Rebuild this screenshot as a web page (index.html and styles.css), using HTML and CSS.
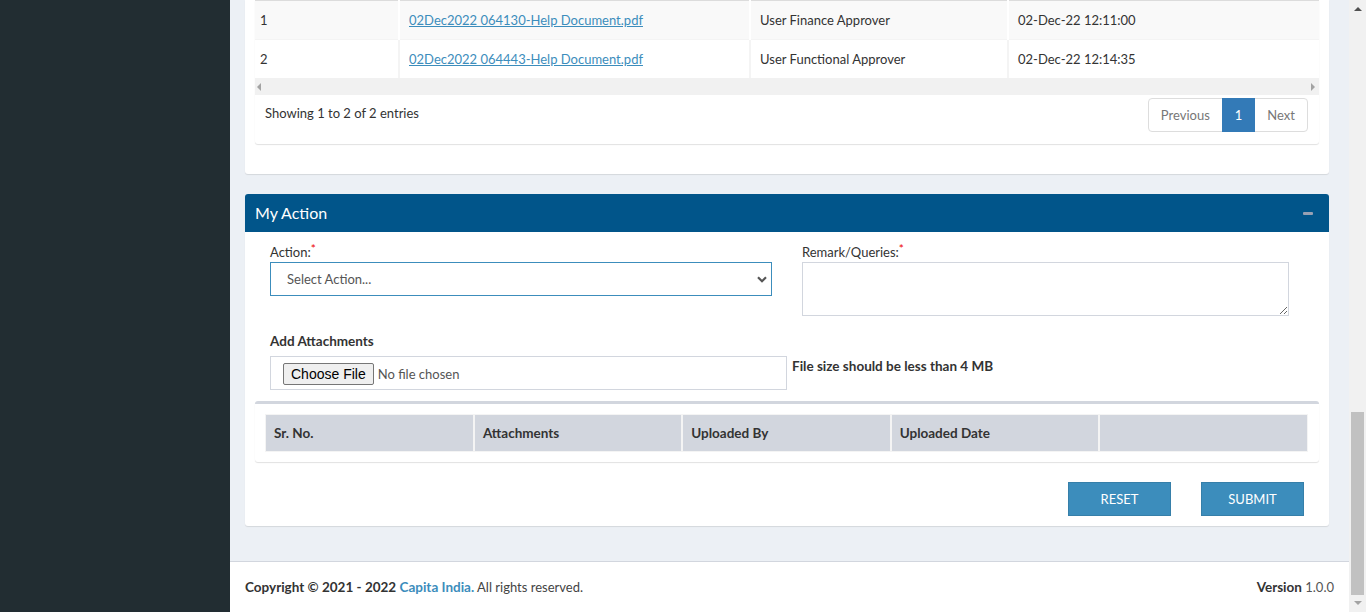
FILE: index.html
```html
<!DOCTYPE html>
<html lang="en">
<head>
<meta charset="utf-8">
<title>My Action</title>
<link rel="stylesheet" href="styles.css">
</head>
<body>
<div class="layout">
  <aside class="sidebar"></aside>
  <div class="main">
    <div class="content">
      <section class="card card-top">
        <div class="box list-box">
          <div class="table-scroll">
            <table class="grid">
              <tbody>
                <tr class="odd">
                  <td class="c1">1</td>
                  <td class="c2"><a href="#">02Dec2022 064130-Help Document.pdf</a></td>
                  <td class="c3">User Finance Approver</td>
                  <td class="c4">02-Dec-22 12:11:00</td>
                </tr>
                <tr class="even">
                  <td class="c1">2</td>
                  <td class="c2"><a href="#">02Dec2022 064443-Help Document.pdf</a></td>
                  <td class="c3">User Functional Approver</td>
                  <td class="c4">02-Dec-22 12:14:35</td>
                </tr>
              </tbody>
            </table>
          </div>
          <div class="hscroll"><span class="tri tri-left"></span><span class="tri tri-right"></span></div>
          <div class="dt-footer">
            <div class="dt-info">Showing 1 to 2 of 2 entries</div>
            <ul class="pagination">
              <li class="disabled"><a href="#">Previous</a></li>
              <li class="active"><a href="#">1</a></li>
              <li class="disabled"><a href="#">Next</a></li>
            </ul>
          </div>
        </div>
      </section>

      <section class="card action-card">
        <div class="card-header">
          <h3 class="card-title">My Action</h3>
          <button class="tool-btn" type="button" aria-label="Collapse"><span class="minus"></span></button>
        </div>
        <div class="card-body">
          <div class="form-row">
            <div class="field">
              <label class="lbl" for="action">Action:<span class="req">*</span></label>
              <div class="select-wrap">
                <select id="action" class="control select">
                  <option>Select Action...</option>
                </select>
                <svg class="chev" width="10" height="7" viewBox="0 0 10 7"><path d="M1 1.2 L5 5.2 L9 1.2" fill="none" stroke="#555" stroke-width="2.2"/></svg>
              </div>
            </div>
            <div class="field">
              <label class="lbl" for="remark">Remark/Queries:<span class="req">*</span></label>
              <textarea id="remark" class="control textarea"></textarea>
            </div>
          </div>

          <div class="attach">
            <div class="lbl-bold">Add Attachments</div>
            <div class="file-row">
              <div class="file-box"><input type="file" class="file-input"></div>
              <span class="hint">File size should be less than 4 MB</span>
            </div>
          </div>

          <div class="box attach-box">
            <table class="att-table">
              <thead>
                <tr>
                  <th>Sr. No.</th>
                  <th>Attachments</th>
                  <th>Uploaded By</th>
                  <th>Uploaded Date</th>
                  <th></th>
                </tr>
              </thead>
            </table>
          </div>

          <div class="actions">
            <button class="btn" type="button">RESET</button>
            <button class="btn" type="button">SUBMIT</button>
          </div>
        </div>
      </section>
    </div>

    <footer class="footer">
      <div><strong>Copyright © 2021 - 2022 <a href="#">Capita India.</a></strong> All rights reserved.</div>
      <div><strong>Version</strong> <span class="ver">1.0.0</span></div>
    </footer>
  </div>
  <div class="vscroll">
    <span class="vtri vtri-up"></span>
    <span class="thumb"></span>
    <span class="vtri vtri-down"></span>
  </div>
</div>
</body>
</html>
```

FILE: styles.css
```css
* { box-sizing: border-box; }

html, body {
  margin: 0;
  height: 612px;
  overflow: hidden;
}

body {
  font-family: "Lato", "Liberation Sans", sans-serif;
  font-size: 13px;
  line-height: 20px;
  color: #333;
  background: #ecf0f5;
}

strong, b { font-size: 13.5px; }

a { color: #3c8dbc; }

.layout {
  display: flex;
  height: 612px;
}

.sidebar {
  width: 230px;
  flex: none;
  background: #222d32;
}

.main {
  flex: 1;
  display: flex;
  flex-direction: column;
  min-width: 0;
}

.content {
  flex: 1;
  padding: 0 20px 15px 15px;
}

.card {
  background: #fff;
  border-radius: 3px;
  box-shadow: 0 1px 1px rgba(0,0,0,0.1);
}

.card-top {
  padding: 0 10px 10px;
  border-radius: 0 0 3px 3px;
  margin-bottom: 20px;
}

.box {
  background: #fff;
  border-radius: 3px;
  box-shadow: 0 1px 1px rgba(0,0,0,0.12);
}

.list-box {
  border-radius: 0 0 3px 3px;
  margin-bottom: 20px;
}

.table-scroll { overflow: hidden; }

.grid {
  border-collapse: collapse;
  width: 1200px;
}

.grid td {
  padding: 8px 9px;
  line-height: 22px;
  border-top: 1px solid #f4f4f4;
  border-left: 2px solid #f4f4f4;
  white-space: nowrap;
  text-align: left;
}

.grid tr.odd td { background: #f9f9f9; border-top-color: #dcdcdc; border-left-color: #fff; }
.grid td.c1 { width: 144px; border-left: 0; padding-left: 5px; }
.grid td.c2 { width: 351px; }
.grid td.c3 { width: 258px; }

.hscroll {
  height: 17px;
  background: #f1f1f1;
  display: flex;
  align-items: center;
  justify-content: space-between;
  padding: 0 4px 0 2px;
}

.tri { width: 0; height: 0; border-top: 4px solid transparent; border-bottom: 4px solid transparent; }
.tri-left { border-right: 4px solid #a3a3a3; }
.tri-right { border-left: 4px solid #a3a3a3; }

.dt-footer {
  display: flex;
  justify-content: space-between;
  align-items: flex-start;
  padding: 3px 11px 12px 10px;
}

.dt-info { padding-top: 5px; }

.pagination {
  display: flex;
  list-style: none;
  margin: 0;
  padding: 0;
}

.pagination a {
  display: block;
  padding: 6px 12px;
  line-height: 20px;
  border: 1px solid #ddd;
  margin-left: -1px;
  text-decoration: none;
  color: #777;
  background: #fff;
}

.pagination li:first-child a { border-radius: 4px 0 0 4px; margin-left: 0; }
.pagination li:last-child a { border-radius: 0 4px 4px 0; }
.pagination li.active a { background: #337ab7; border-color: #337ab7; color: #fff; position: relative; }

.action-card { margin-bottom: 20px; }

.card-header {
  display: flex;
  align-items: center;
  justify-content: space-between;
  background: #01558a;
  padding: 9px 16px 9px 10px;
  border-radius: 3px 3px 0 0;
}

.card-title {
  margin: 0;
  font-size: 16px;
  line-height: 20px;
  font-weight: 400;
  color: #fff;
}

.tool-btn {
  border: 0;
  background: transparent;
  padding: 0;
  display: flex;
  align-items: center;
}

.minus {
  display: block;
  width: 10px;
  height: 3px;
  border-radius: 1px;
  background: #97a0b3;
}

.card-body { padding: 10px; }

.form-row {
  display: grid;
  grid-template-columns: 502px 487px;
  column-gap: 30px;
  padding-left: 15px;
  margin-bottom: 15px;
}

.lbl { display: block; line-height: 20px; }
.req { color: #e00; vertical-align: top; font-size: 12px; line-height: 14px; }

.control {
  display: block;
  width: 100%;
  font-family: inherit;
  font-size: 13px;
  color: #555;
  background: #fff;
  border: 1px solid #d2d6de;
  border-radius: 0;
}

.select-wrap { position: relative; }

.select {
  height: 34px;
  padding: 0 16px;
  appearance: none;
  -webkit-appearance: none;
  border-color: #3c8dbc;
}

.chev { position: absolute; right: 5px; top: 14px; }

.textarea {
  height: 54px;
  resize: vertical;
  padding: 6px 12px;
}

.attach { padding-left: 15px; }

.lbl-bold { font-weight: 700; font-size: 13.5px; margin-bottom: 5px; }

.file-row { display: flex; align-items: flex-start; gap: 5px; }

.file-box {
  width: 517px;
  height: 34px;
  border: 1px solid #d2d6de;
  padding: 6px 12px 0;
}

.file-input {
  font-family: inherit;
  font-size: 13px;
  color: #555;
}

.file-input::file-selector-button {
  font-family: "Liberation Sans", Arial, sans-serif;
  font-size: 14px;
  color: #000;
  background: #efefef;
  border: 1px solid #767676;
  border-radius: 2px;
  padding: 2px 7px;
  margin-right: 4px;
  height: 22px;
}

.hint { font-weight: 700; font-size: 13.5px; line-height: 20px; }

.attach-box {
  margin-top: 11px;
  margin-bottom: 20px;
  border-top: 3px solid #d2d6de;
  padding: 10px 11px 10px 10px;
  border-radius: 3px;
}

.att-table {
  width: 100%;
  border-collapse: collapse;
  table-layout: fixed;
  border: 1px solid #f4f4f4;
}

.att-table th {
  background: #d2d6de;
  text-align: left;
  font-weight: 700;
  font-size: 13.5px;
  padding: 9px 8px;
  line-height: 18px;
  border-left: 2px solid #f4f4f4;
}

.att-table th:first-child { border-left: 0; }

.actions {
  display: flex;
  justify-content: flex-end;
  gap: 30px;
  padding-right: 15px;
}

.btn {
  width: 103px;
  height: 34px;
  background: #3c8dbc;
  border: 1px solid #367fa9;
  color: #fff;
  font-family: inherit;
  font-size: 13px;
  border-radius: 0;
}

.footer {
  display: flex;
  justify-content: space-between;
  background: #fff;
  border-top: 1px solid #d2d6de;
  padding: 15px 15px;
  color: #444;
}

.footer a { color: #3c8dbc; text-decoration: none; }
.footer strong { color: #333; }
.ver { color: #555; }

.vscroll {
  width: 17px;
  flex: none;
  background: #f1f1f1;
  display: flex;
  flex-direction: column;
  align-items: center;
}

.vtri { width: 0; height: 0; border-left: 4px solid transparent; border-right: 4px solid transparent; }
.vtri-up { border-bottom: 4px solid #505050; margin-top: 7px; }
.vtri-down { border-top: 4px solid #a3a3a3; margin: 6px 0 7px; }

.thumb {
  margin-top: auto;
  width: 13px;
  height: 183px;
  background: #c1c1c1;
}
```
